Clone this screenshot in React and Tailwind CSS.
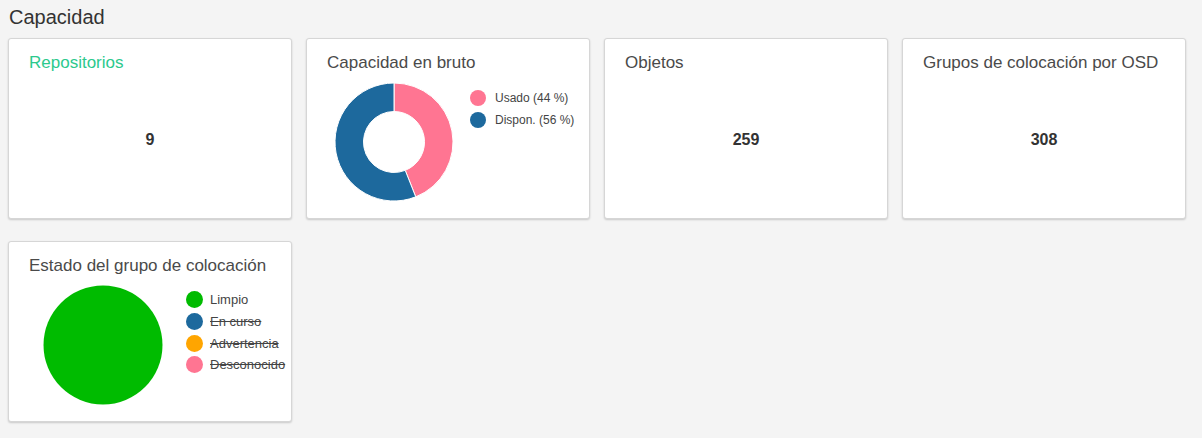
import React from 'react';

const font = "font-['Liberation_Sans',Arial,sans-serif]";

function Card({ children }) {
    return (
        <div className="h-[181px] bg-white border border-[#d6d6d6] rounded-[3px] shadow-[0_1px_2px_rgba(0,0,0,0.18)] pt-[14px] px-[20px]">
            {children}
        </div>
    );
}

function CardTitle({ children, green }) {
    return (
        <div className={`text-[17px] leading-[20px] whitespace-nowrap ${green ? 'text-[#2cc98d]' : 'text-[#4a4a4a]'}`}>
            {children}
        </div>
    );
}

function NumberCard({ title, value, green }) {
    return (
        <Card>
            <CardTitle green={green}>{title}</CardTitle>
            <div className="mt-[57px] text-center text-[16px] leading-[20px] font-bold text-[#333]">{value}</div>
        </Card>
    );
}

function Legend({ items, className, big }) {
    return (
        <div className={`flex flex-col ${className}`}>
            {items.map(item => (
                <div key={item.label} className={`flex items-center ${big ? 'h-[21.7px]' : 'h-[22px]'}`}>
                    <span
                        className={`rounded-full shrink-0 ${big ? 'w-[17px] h-[17px]' : 'w-[16px] h-[16px]'}`}
                        style={{ backgroundColor: item.color }}
                    />
                    <span
                        className={`text-[#444] whitespace-nowrap ${big ? 'ml-[7px] text-[13px] leading-[15px]' : 'ml-[9px] text-[12px] leading-[14px]'} ${item.off ? 'line-through' : ''}`}
                    >
                        {item.label}
                    </span>
                </div>
            ))}
        </div>
    );
}

function DonutCard() {
    return (
        <Card>
            <CardTitle>Capacidad en bruto</CardTitle>
            <div className="flex mt-[9px]">
                <svg width="120" height="120" viewBox="0 0 120 120" className="ml-[7px] shrink-0">
                    <path
                        d="M60 1 A59 59 0 0 1 81.72 114.86 L71.23 88.36 A30.5 30.5 0 0 0 60 29.5 Z"
                        fill="#ff7592"
                        stroke="#fff"
                        strokeWidth="1"
                    />
                    <path
                        d="M81.72 114.86 A59 59 0 1 1 60 1 L60 29.5 A30.5 30.5 0 1 0 71.23 88.36 Z"
                        fill="#1d699d"
                        stroke="#fff"
                        strokeWidth="1"
                    />
                </svg>
                <Legend
                    className="ml-[16px] mt-[5px]"
                    items={[
                        { label: 'Usado (44 %)', color: '#ff7592' },
                        { label: 'Dispon. (56 %)', color: '#1d699d' },
                    ]}
                />
            </div>
        </Card>
    );
}

function PieCard() {
    return (
        <Card>
            <CardTitle>Estado del grupo de colocación</CardTitle>
            <div className="flex mt-[9px]">
                <svg width="120" height="120" viewBox="0 0 120 120" className="ml-[14px] shrink-0">
                    <circle cx="60" cy="60" r="59.5" fill="#00bb00" />
                </svg>
                <Legend
                    big
                    className="ml-[23px] mt-[4px]"
                    items={[
                        { label: 'Limpio', color: '#00bb00' },
                        { label: 'En curso', color: '#1d699d', off: true },
                        { label: 'Advertencia', color: '#ffa500', off: true },
                        { label: 'Desconocido', color: '#ff7592', off: true },
                    ]}
                />
            </div>
        </Card>
    );
}

export default function App() {
    return (
        <div className={`min-h-screen bg-[#f4f4f4] px-[8px] pt-[5px] ${font}`}>
            <h2 className="pl-[1px] text-[20px] leading-[24px] font-normal text-[#333]">Capacidad</h2>
            <div className="mt-[9px] grid grid-cols-[repeat(4,284px)] gap-x-[14px] gap-y-[22px]">
                <NumberCard title="Repositorios" value="9" green />
                <DonutCard />
                <NumberCard title="Objetos" value="259" />
                <NumberCard title="Grupos de colocación por OSD" value="308" />
                <PieCard />
            </div>
        </div>
    );
}
